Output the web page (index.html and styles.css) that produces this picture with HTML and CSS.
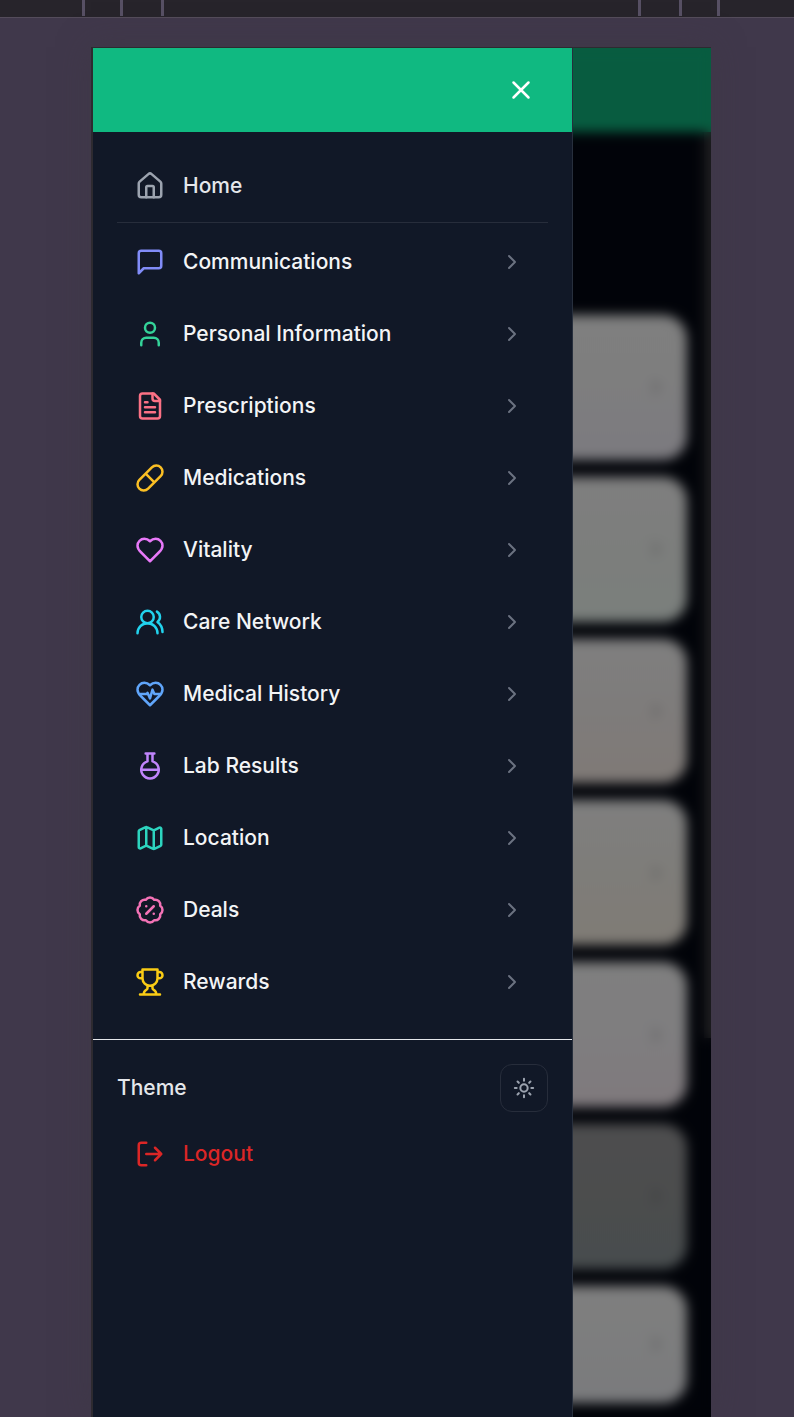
FILE: index.html
```html
<!DOCTYPE html>
<html lang="en">
<head>
<meta charset="utf-8">
<title>Menu</title>
<link rel="stylesheet" href="styles.css">
</head>
<body>
<div class="ruler">
  <div class="ticks"><i></i><i></i><i></i></div>
  <div class="ticks ticks-right"><i></i><i></i><i></i></div>
</div>
<main class="device">
  <div class="page">
    <div class="page-header"></div>
    <div class="cards">
      <div class="card c1"><svg viewBox="0 0 24 24"><path d="m9 18 6-6-6-6"/></svg></div>
      <div class="card c2"><svg viewBox="0 0 24 24"><path d="m9 18 6-6-6-6"/></svg></div>
      <div class="card c3"><svg viewBox="0 0 24 24"><path d="m9 18 6-6-6-6"/></svg></div>
      <div class="card c4"><svg viewBox="0 0 24 24"><path d="m9 18 6-6-6-6"/></svg></div>
      <div class="card c5"><svg viewBox="0 0 24 24"><path d="m9 18 6-6-6-6"/></svg></div>
      <div class="card c6"><svg viewBox="0 0 24 24"><path d="m9 18 6-6-6-6"/></svg></div>
      <div class="card c7"><svg viewBox="0 0 24 24"><path d="m9 18 6-6-6-6"/></svg></div>
    </div>
    <div class="scroll-thumb"></div>
  </div>
  <div class="overlay"></div>
  <aside class="drawer">
    <header class="drawer-header">
      <svg class="icon" viewBox="0 0 24 24"><path d="M18 6 6 18M6 6l12 12"/></svg>
    </header>
    <nav class="menu">
      <a class="item home"><svg class="icon" viewBox="0 0 24 24"><path d="M15 21v-8a1 1 0 0 0-1-1h-4a1 1 0 0 0-1 1v8"/><path d="M3 10a2 2 0 0 1 .709-1.528l7-5.999a2 2 0 0 1 2.582 0l7 5.999A2 2 0 0 1 21 10v9a2 2 0 0 1-2 2H5a2 2 0 0 1-2-2z"/></svg><span>Home</span></a>
      <div class="divider"></div>
      <a class="item indigo"><svg class="icon" viewBox="0 0 24 24"><path d="M21 15a2 2 0 0 1-2 2H7l-4 4V5a2 2 0 0 1 2-2h14a2 2 0 0 1 2 2z"/></svg><span>Communications</span><svg class="chev" viewBox="0 0 24 24"><path d="m9 18 6-6-6-6"/></svg></a>
      <a class="item emerald"><svg class="icon" viewBox="0 0 24 24"><path d="M19 21v-2a4 4 0 0 0-4-4H9a4 4 0 0 0-4 4v2"/><circle cx="12" cy="7" r="4"/></svg><span>Personal Information</span><svg class="chev" viewBox="0 0 24 24"><path d="m9 18 6-6-6-6"/></svg></a>
      <a class="item rose"><svg class="icon" viewBox="0 0 24 24"><path d="M15 2H6a2 2 0 0 0-2 2v16a2 2 0 0 0 2 2h12a2 2 0 0 0 2-2V7Z"/><path d="M14 2v4a2 2 0 0 0 2 2h4M10 9H8M16 13H8M16 17H8"/></svg><span>Prescriptions</span><svg class="chev" viewBox="0 0 24 24"><path d="m9 18 6-6-6-6"/></svg></a>
      <a class="item amber"><svg class="icon" viewBox="0 0 24 24"><path d="m10.5 20.5 10-10a4.95 4.95 0 1 0-7-7l-10 10a4.95 4.95 0 1 0 7 7ZM8.5 8.5l7 7"/></svg><span>Medications</span><svg class="chev" viewBox="0 0 24 24"><path d="m9 18 6-6-6-6"/></svg></a>
      <a class="item fuchsia"><svg class="icon" viewBox="0 0 24 24"><path d="M19 14c1.49-1.46 3-3.21 3-5.5A5.5 5.5 0 0 0 16.5 3c-1.76 0-3 .5-4.5 2-1.5-1.5-2.74-2-4.5-2A5.5 5.5 0 0 0 2 8.5c0 2.3 1.5 4.05 3 5.5l7 7Z"/></svg><span>Vitality</span><svg class="chev" viewBox="0 0 24 24"><path d="m9 18 6-6-6-6"/></svg></a>
      <a class="item cyan"><svg class="icon" viewBox="0 0 24 24"><path d="M18 21a8 8 0 0 0-16 0"/><circle cx="10" cy="8" r="5"/><path d="M22 20c0-3.37-2-6.5-4-8a5 5 0 0 0-.45-8.3"/></svg><span>Care Network</span><svg class="chev" viewBox="0 0 24 24"><path d="m9 18 6-6-6-6"/></svg></a>
      <a class="item blue"><svg class="icon" viewBox="0 0 24 24"><path d="M19 14c1.49-1.46 3-3.21 3-5.5A5.5 5.5 0 0 0 16.5 3c-1.76 0-3 .5-4.5 2-1.5-1.5-2.74-2-4.5-2A5.5 5.5 0 0 0 2 8.5c0 2.3 1.5 4.05 3 5.5l7 7Z"/><path d="M3.22 12H9.5l.5-1 2 4.5 2-7 1.5 3.5h5.27"/></svg><span>Medical History</span><svg class="chev" viewBox="0 0 24 24"><path d="m9 18 6-6-6-6"/></svg></a>
      <a class="item purple"><svg class="icon" viewBox="0 0 24 24"><path d="M10 2v6.29M14 8.29V2M8.5 2h7M14 8.29a7 7 0 1 1-4 0M5 15h14"/></svg><span>Lab Results</span><svg class="chev" viewBox="0 0 24 24"><path d="m9 18 6-6-6-6"/></svg></a>
      <a class="item teal"><svg class="icon" viewBox="0 0 24 24"><path d="M14.106 5.553a2 2 0 0 0 1.788 0l3.659-1.83A1 1 0 0 1 21 4.619v12.764a1 1 0 0 1-.553.894l-4.553 2.277a2 2 0 0 1-1.788 0l-4.212-2.106a2 2 0 0 0-1.788 0l-3.659 1.83A1 1 0 0 1 3 19.381V6.618a1 1 0 0 1 .553-.894l4.553-2.277a2 2 0 0 1 1.788 0zM15 5.764v15M9 3.236v15"/></svg><span>Location</span><svg class="chev" viewBox="0 0 24 24"><path d="m9 18 6-6-6-6"/></svg></a>
      <a class="item pink"><svg class="icon" viewBox="0 0 24 24"><path d="M3.85 8.62a4 4 0 0 1 4.78-4.77 4 4 0 0 1 6.74 0 4 4 0 0 1 4.78 4.78 4 4 0 0 1 0 6.74 4 4 0 0 1-4.77 4.78 4 4 0 0 1-6.75 0 4 4 0 0 1-4.78-4.77 4 4 0 0 1 0-6.76ZM15 9l-6 6M9 9h.01M15 15h.01"/></svg><span>Deals</span><svg class="chev" viewBox="0 0 24 24"><path d="m9 18 6-6-6-6"/></svg></a>
      <a class="item yellow"><svg class="icon" viewBox="0 0 24 24"><path d="M6 9H4.5a2.5 2.5 0 0 1 0-5H6M18 9h1.5a2.5 2.5 0 0 0 0-5H18M4 22h16M10 14.66V17c0 .55-.47.98-.97 1.21C7.85 18.75 7 20.24 7 22M14 14.66V17c0 .55.47.98.97 1.21C16.15 18.75 17 20.24 17 22M18 2H6v7a6 6 0 0 0 12 0V2Z"/></svg><span>Rewards</span><svg class="chev" viewBox="0 0 24 24"><path d="m9 18 6-6-6-6"/></svg></a>
    </nav>
    <footer class="drawer-footer">
      <div class="theme"><span>Theme</span>
        <button class="theme-button"><svg viewBox="0 0 24 24"><circle cx="12" cy="12" r="4"/><path d="M12 2v2M12 20v2M4.93 4.93l1.41 1.41M17.66 17.66l1.41 1.41M2 12h2M20 12h2M6.34 17.66l-1.41 1.41M19.07 4.93l-1.41 1.41"/></svg></button>
      </div>
      <a class="item logout"><svg class="icon" viewBox="0 0 24 24"><path d="M9 21H5a2 2 0 0 1-2-2V5a2 2 0 0 1 2-2h4M16 17l5-5-5-5M21 12H9"/></svg><span>Logout</span></a>
    </footer>
  </aside>
</main>
</body>
</html>
```
FILE: styles.css
```css
* { box-sizing: border-box; }
body {
  margin: 0;
  height: 1417px;
  overflow: hidden;
  background: #40384b;
  font-family: Inter, sans-serif;
  font-size: 21px;
  font-weight: 500;
}
svg {
  display: block;
  flex: none;
  fill: none;
  stroke: currentColor;
  stroke-width: 2;
  stroke-linecap: round;
  stroke-linejoin: round;
}
.ruler {
  display: flex;
  justify-content: space-between;
  height: 18px;
  padding: 0 74px 0 82px;
  background: #27242b;
  border-bottom: 1px solid #544c5b;
}
.ticks { display: flex; gap: 35px; }
.ticks i { width: 3px; height: 16px; background: #575064; }
.ticks i:last-child { margin-left: 3px; }
.ticks-right i:last-child { margin-left: 0; }
.ticks-right i:nth-child(2) { margin-left: 3px; }
.device {
  position: relative;
  width: 620px;
  height: 1370px;
  margin: 29px 0 0 91px;
  border: solid #2d2a30;
  border-width: 1px 0 0 2px;
  box-shadow: 0 0 30px rgba(62, 56, 68, .5);
}
.page {
  position: relative;
  isolation: isolate;
  height: 100%;
  overflow: hidden;
  background: #030712;
}
.page-header { position: relative; z-index: 1; height: 84px; background: #10b981; }
.cards {
  display: flex;
  flex-direction: column;
  gap: 17px;
  padding: 183px 24px 0;
}
.card {
  display: flex;
  justify-content: flex-end;
  align-items: center;
  flex: none;
  height: 144.8px;
  padding-right: 19px;
  border-radius: 24px;
  color: #b0b0b2;
}
.card svg { width: 24px; height: 24px; }
.c1 { background: linear-gradient(#fefefe, #fdfdfd 40%, #f8f5ff); }
.c2 { background: linear-gradient(#fefefe, #f9fcf9 50%, #f5fff9); }
.c3 { background: linear-gradient(#fefefe, #fdf8f6 50%, #fff4ed); }
.c4 { background: linear-gradient(#fefefe, #fdfaf3 50%, #fff7eb); }
.c5 { background: linear-gradient(#fefefe, #fefcff 50%, #fff3fa); }
.c6 { background: linear-gradient(#9b9b9d, #989a9b 50%, #8f999c); color: #6c6e70; }
.c7 { height: 117px; background: linear-gradient(#fefefe, #fafbfc 50%, #f4f5fa); }
.scroll-thumb {
  position: absolute;
  top: 0;
  right: 0;
  width: 7px;
  height: 990px;
  background: #3c3c40;
}
.overlay {
  position: absolute;
  inset: 0;
  background: rgba(0, 0, 0, .5);
  backdrop-filter: blur(6px);
}
.drawer {
  position: absolute;
  top: 0;
  left: 0;
  width: 480px;
  height: 100%;
  background: #111827;
  border-right: 1px solid #272f3d;
  color: #f3f4f6;
}
.drawer-header {
  display: flex;
  align-items: center;
  justify-content: flex-end;
  height: 84px;
  padding-right: 36px;
  background: #10b981;
  color: #fff;
}
.icon { width: 30px; height: 30px; }
.menu {
  height: 908px;
  padding: 18px 24px 0;
  border-bottom: 1px solid #e5e7eb;
}
.divider { height: 1px; margin-bottom: 3px; background: #272d3b; }
.item {
  display: flex;
  align-items: center;
  gap: 18px;
  height: 72px;
  padding: 0 24px 0 18px;
}
.item span { flex: 1; }
.item span, .theme span { padding-bottom: 2px; }
.chev { width: 24px; height: 24px; color: #6b7280; }
.home, .theme { color: #e5e7eb; }
.home .icon { color: #9ca3af; }
.indigo .icon { color: #818cf8; }
.emerald .icon { color: #34d399; }
.rose .icon { color: #fb7185; }
.amber .icon { color: #fbbf24; }
.fuchsia .icon { color: #e879f9; }
.cyan .icon { color: #22d3ee; }
.blue .icon { color: #60a5fa; }
.purple .icon { color: #c084fc; }
.teal .icon { color: #2dd4bf; }
.pink .icon { color: #f472b6; }
.yellow .icon { color: #facc15; }
.drawer-footer { padding: 24px 24px 0; }
.theme {
  display: flex;
  align-items: center;
  justify-content: space-between;
  height: 48px;
}
.theme-button {
  display: grid;
  place-items: center;
  width: 48px;
  height: 48px;
  padding: 0;
  border: 1px solid #272d3b;
  border-radius: 12px;
  background: transparent;
  color: #9ca3af;
}
.theme-button svg { width: 22px; height: 22px; stroke-width: 2.2; }
.logout { margin-top: 6px; color: #dc2626; }
```
